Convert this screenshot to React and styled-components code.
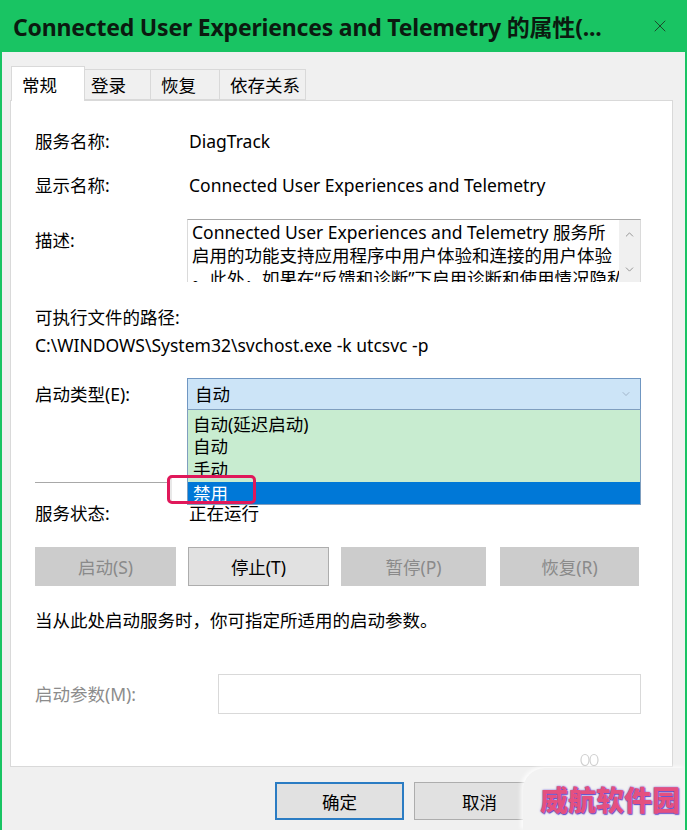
import styled, { createGlobalStyle } from "styled-components"
import { X, ChevronUp, ChevronDown } from "lucide-react"

const GlobalStyle = createGlobalStyle`
  html, body {
    margin: 0;
    padding: 0;
    background: #f0f0f0;
  }
  body {
    font-family: "Noto Sans", "Noto Sans CJK SC", sans-serif;
    color: #000;
  }
`

const tabs = [
    { name: "常规", width: 74, pad: 10 },
    { name: "登录", width: 67, pad: 6 },
    { name: "恢复", width: 70, pad: 10 },
    { name: "依存关系", width: 87, pad: 10 },
]

const options = ["自动(延迟启动)", "自动", "手动", "禁用"]

const controls = [
    { name: "启动(S)", enabled: false },
    { name: "停止(T)", enabled: true },
    { name: "暂停(P)", enabled: false },
    { name: "恢复(R)", enabled: false },
]

export default function App() {
    return (
        <>
            <GlobalStyle />
            <Window>
                <TitleBar>
                    <Title>Connected User Experiences and Telemetry 的属性(...</Title>
                    <Close><X size={20} strokeWidth={1.2} /></Close>
                </TitleBar>

                <Tabs>
                    {tabs.map((t, i) => (
                        <Tab key={t.name} active={i === 0} width={t.width} pad={t.pad}>{t.name}</Tab>
                    ))}
                </Tabs>

                <Panel>
                    <Row>
                        <Label>服务名称:</Label>
                        <Value>DiagTrack</Value>
                    </Row>
                    <Row gap={20}>
                        <Label>显示名称:</Label>
                        <Value>Connected User Experiences and Telemetry</Value>
                    </Row>
                    <Row gap={22} top>
                        <Label offset={9}>描述:</Label>
                        <DescBox>
                            <DescText>
                                <div>Connected User Experiences and Telemetry 服务所</div>
                                <div>启用的功能支持应用程序中用户体验和连接的用户体验</div>
                                <div>。此外，如果在“反馈和诊断”下启用诊断和使用情况隐私</div>
                            </DescText>
                            <ScrollBar>
                                <ChevronUp size={13} strokeWidth={1.4} />
                                <ChevronDown size={13} strokeWidth={1.4} />
                            </ScrollBar>
                        </DescBox>
                    </Row>
                    <Line gap={23}>可执行文件的路径:</Line>
                    <Line gap={4}>C:\WINDOWS\System32\svchost.exe -k utcsvc -p</Line>
                    <Row gap={21}>
                        <Label>启动类型(E):</Label>
                        <Combo>
                            <ComboValue>自动</ComboValue>
                            <ChevronDown size={12} strokeWidth={1.3} color="#8a9bb0" />
                            <DropList>
                                {options.map((o, i) => (
                                    <Option key={o} selected={i === 3}>{o}</Option>
                                ))}
                            </DropList>
                            <Highlight />
                        </Combo>
                    </Row>
                    <Separator />
                    <Row gap={18}>
                        <Label>服务状态:</Label>
                        <Value>正在运行</Value>
                    </Row>
                    <Buttons>
                        {controls.map(c => (
                            <CtrlButton key={c.name} enabled={c.enabled}>{c.name}</CtrlButton>
                        ))}
                    </Buttons>
                    <Line gap={22}>当从此处启动服务时，你可指定所适用的启动参数。</Line>
                    <Row gap={42}>
                        <Label muted wide>启动参数(M):</Label>
                        <ParamInput />
                    </Row>
                </Panel>

                <Footer>
                    <DialogButton primary>确定</DialogButton>
                    <DialogButton>取消</DialogButton>
                </Footer>

                <Watermark>
                    <Ears viewBox="0 0 24 14" width="24" height="14">
                        <ellipse cx="7" cy="8" rx="4" ry="5.5" fill="none" stroke="#d0d0d0" strokeWidth="1.2" />
                        <ellipse cx="16" cy="8" rx="4" ry="5.5" fill="none" stroke="#d0d0d0" strokeWidth="1.2" />
                    </Ears>
                    <MarkText>威航软件园</MarkText>
                </Watermark>
            </Window>
        </>
    )
}

const Window = styled.div`
position: relative;
width: 687px;
height: 830px;
box-sizing: border-box;
border-left: 2px solid #19c463;
border-right: 2px solid #19c463;
background: #f0f0f0;
display: flex;
flex-direction: column;
overflow: hidden;
`

const TitleBar = styled.div`
height: 52px;
flex-shrink: 0;
background: #19c463;
display: flex;
align-items: center;
padding-left: 11px;
`

const Title = styled.div`
flex: 1;
min-width: 0;
font-size: 23px;
font-weight: 700;
color: #0b1a10;
white-space: nowrap;
overflow: hidden;
letter-spacing: -0.2px;
`

const Close = styled.div`
width: 50px;
height: 52px;
flex-shrink: 0;
display: flex;
align-items: center;
justify-content: center;
color: #1d4a2c;
`

const Tabs = styled.div`
display: flex;
align-items: flex-end;
height: 35px;
margin: 13px 0 0 10px;
position: relative;
z-index: 1;
`

const Tab = styled.div`
box-sizing: border-box;
width: ${p => p.width}px;
height: ${p => (p.active ? 35 : 31)}px;
margin-left: -1px;
padding-left: ${p => p.pad}px;
display: flex;
align-items: center;
font-size: 17.5px;
background: ${p => (p.active ? "#fff" : "#f0f0f0")};
border: 1px solid #d9d9d9;
border-bottom: ${p => (p.active ? "none" : "1px solid #d9d9d9")};
margin-bottom: ${p => (p.active ? -1 : 0)}px;
`

const Panel = styled.div`
position: relative;
box-sizing: border-box;
height: 667px;
margin: 0 12px 0 8px;
padding: 28px 31px 0 24px;
background: #fff;
border: 1px solid #d9d9d9;
flex-shrink: 0;
`

const Row = styled.div`
display: flex;
align-items: ${p => (p.top ? "flex-start" : "center")};
margin-top: ${p => p.gap || 0}px;
`

const Label = styled.div`
width: ${p => (p.wide ? 183 : 152)}px;
flex-shrink: 0;
font-size: 17.5px;
line-height: 24px;
padding-top: ${p => p.offset || 0}px;
color: ${p => (p.muted ? "#8c8c8c" : "#000")};
white-space: nowrap;
`

const Value = styled.div`
padding-left: 2px;
font-size: 17.5px;
line-height: 24px;
white-space: nowrap;
`

const Line = styled.div`
margin-top: ${p => p.gap || 0}px;
font-size: 17.5px;
line-height: 24px;
white-space: nowrap;
`

const DescBox = styled.div`
flex: 1;
min-width: 0;
height: 63px;
box-sizing: border-box;
display: flex;
border: 1px solid #dadada;
border-top-color: #a8a8a8;
border-bottom: none;
`

const DescText = styled.div`
flex: 1;
min-width: 0;
overflow: hidden;
padding: 1px 0 0 4px;
font-size: 17.5px;
line-height: 23px;
white-space: nowrap;
`

const ScrollBar = styled.div`
width: 21px;
flex-shrink: 0;
background: #f0f0f0;
display: flex;
flex-direction: column;
align-items: center;
justify-content: space-between;
padding: 8px 0 6px;
color: #7a7a7a;
`

const Combo = styled.div`
position: relative;
flex: 1;
height: 32px;
box-sizing: border-box;
background: #cce4f7;
border: 1px solid #6f96c2;
display: flex;
align-items: center;
justify-content: space-between;
padding: 0 8px 0 7px;
`

const ComboValue = styled.div`
font-size: 17.5px;
line-height: 24px;
`

const DropList = styled.div`
position: absolute;
left: -1px;
right: -1px;
top: 30px;
box-sizing: border-box;
padding-top: 2px;
background: #c8ecd0;
border: 1px solid #7f9ebf;
z-index: 2;
`

const Option = styled.div`
height: 22.5px;
margin-top: ${p => (p.selected ? 2 : 0)}px;
padding-left: 5px;
display: flex;
align-items: center;
font-size: 17.5px;
background: ${p => (p.selected ? "#0078d7" : "transparent")};
color: ${p => (p.selected ? "#fff" : "#000")};
`

const Highlight = styled.div`
position: absolute;
left: -21px;
top: 96px;
width: 89px;
height: 29px;
box-sizing: border-box;
border: 3px solid #e0185a;
border-radius: 5px;
background: linear-gradient(90deg, #e8e8e8 0 2px, #fff 2px 17px, transparent 17px);
z-index: 3;
`

const Separator = styled.div`
height: 1px;
margin-top: 72px;
background: #a8a8a8;
`

const Buttons = styled.div`
display: grid;
grid-template-columns: 141px 141px 145px 141px;
column-gap: 12px;
margin-top: 22px;
& > :nth-child(4) {
    margin-left: 2px;
}
`

const CtrlButton = styled.div`
height: 39px;
box-sizing: border-box;
display: flex;
align-items: center;
justify-content: center;
font-size: 17.5px;
background: ${p => (p.enabled ? "#e1e1e1" : "#cccccc")};
border: 1px solid ${p => (p.enabled ? "#adadad" : "#cccccc")};
color: ${p => (p.enabled ? "#000" : "#8a8a8a")};
`

const ParamInput = styled.div`
flex: 1;
height: 40px;
box-sizing: border-box;
border: 1px solid #d9d9d9;
background: #fff;
`

const Footer = styled.div`
display: flex;
gap: 10px;
padding: 15px 0 0 273px;
`

const DialogButton = styled.div`
width: ${p => (p.primary ? 129 : 131)}px;
height: 38px;
box-sizing: border-box;
display: flex;
align-items: center;
justify-content: center;
font-size: 17.5px;
background: #e1e1e1;
border: ${p => (p.primary ? "2px solid #2b7cc3" : "1px solid #adadad")};
`

const Watermark = styled.div`
position: absolute;
right: 0;
bottom: 0;
width: 162px;
height: 62px;
background: #f2f2f2;
border-top-left-radius: 22px;
box-shadow: -2px -1px 4px rgba(255, 255, 255, 0.9);
display: flex;
align-items: center;
justify-content: flex-end;
padding-right: 5px;
box-sizing: border-box;
`

const Ears = styled.svg`
position: absolute;
left: 55px;
top: -16px;
`

const MarkText = styled.div`
font-family: "Noto Sans CJK SC", sans-serif;
font-size: 28px;
font-weight: 900;
color: #e4507f;
letter-spacing: 0;
text-shadow: 0 0 2px #6a55d8, 1px 1px 1px #5b4bc4;
`
